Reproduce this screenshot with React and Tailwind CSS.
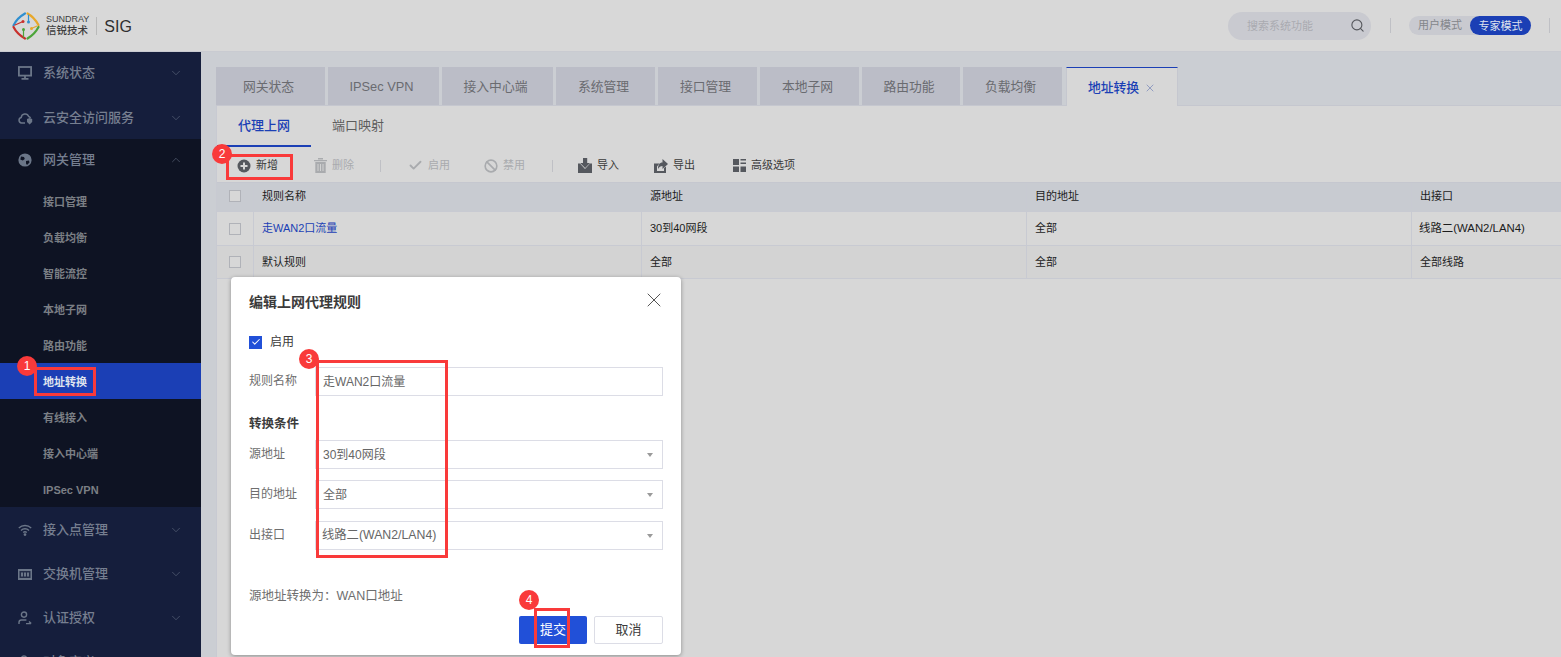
import React from 'react'
import { ChevronDown, ChevronUp, Search, X, Check, Ban } from 'lucide-react'

const font = { fontFamily: '"Liberation Sans", "Noto Sans CJK SC", sans-serif' }

const Logo = () => (
    <svg width="28" height="28" viewBox="0 0 28 28" fill="none" strokeWidth="2.2" strokeLinecap="round">
        <path d="M1.5 13.5 Q5 6 13 1.5" stroke="#2f8fd0" />
        <path d="M15.5 1.5 Q22 5 26.5 13" stroke="#e8a82a" />
        <path d="M1.5 15 Q5 22 13 26.5" stroke="#c8302c" />
        <path d="M26.5 15 Q23 22 15.5 26.5" stroke="#4ca53a" />
        <path d="M3 13 L11 9.5" stroke="#c8302c" strokeWidth="1.2" />
        <path d="M16.5 3 V9.5" stroke="#2f8fd0" strokeWidth="1.2" />
        <path d="M25 14 L19.5 16.5" stroke="#e8a82a" strokeWidth="1.2" />
        <path d="M11.5 18 V25" stroke="#4ca53a" strokeWidth="1.2" />
        <circle cx="11" cy="9.5" r="1.5" fill="#c8302c" />
        <circle cx="16.5" cy="10" r="1.5" fill="#2f8fd0" />
        <circle cx="19.5" cy="16.5" r="1.5" fill="#e8a82a" />
        <circle cx="11.5" cy="17.5" r="1.5" fill="#4ca53a" />
    </svg>
)

const MonitorIcon = () => (
    <svg width="14" height="14" viewBox="0 0 14 14" fill="none" stroke="#6b7688" strokeWidth="1.8">
        <rect x="0.9" y="1" width="12.2" height="8.6" />
        <path d="M7 10v2.5M3.5 12.9h7" />
    </svg>
)

const CloudIcon = () => (
    <svg width="15" height="14" viewBox="0 0 15 14" fill="none" stroke="#6b7688" strokeWidth="1.5">
        <path d="M7 12H3.5a2.8 2.8 0 0 1-.3-5.5 3.9 3.9 0 0 1 7.5-1 3 3 0 0 1 1.8 1.5" />
        <path d="M9 8l2.6-1 2.6 1v3l-2.6 2.5L9 11z" fill="#6b7688" stroke="none" />
    </svg>
)

const GlobeIcon = () => (
    <svg width="14" height="14" viewBox="0 0 14 14">
        <circle cx="7" cy="7" r="6.6" fill="#6b7688" />
        <path d="M3 3.5l3 .5.8 2-2 1.5-2.5-1zM8 8l3-.5.5 2-2.5 2.5-1-1.5z" fill="#0e1323" />
    </svg>
)

const WifiIcon = () => (
    <svg width="14" height="12" viewBox="0 0 14 12" fill="none" stroke="#6b7688" strokeWidth="1.4">
        <path d="M.8 4a9 9 0 0 1 12.4 0M3 6.4a5.8 5.8 0 0 1 8 0M5.2 8.6a2.6 2.6 0 0 1 3.6 0" />
        <circle cx="7" cy="10.6" r=".7" fill="#6b7688" />
    </svg>
)

const SwitchIcon = () => (
    <svg width="14" height="11" viewBox="0 0 14 11">
        <rect width="14" height="11" fill="#6b7688" />
        <rect x="1.5" y="2" width="11" height="7" fill="#232c48" />
        <path d="M3 3.5h2v4H3zM6 3.5h2v4H6zM9 3.5h2v4H9z" fill="#6b7688" />
    </svg>
)

const UserIcon = () => (
    <svg width="14" height="14" viewBox="0 0 14 14" fill="none" stroke="#6b7688" strokeWidth="1.4">
        <circle cx="6" cy="3.6" r="2.6" />
        <path d="M1 13v-1.6A2.4 2.4 0 0 1 3.4 9h5M8 12.6h5M11 10.4l2.2 2.2" />
    </svg>
)

const PlusIcon = ({ color }) => (
    <svg width="14" height="14" viewBox="0 0 14 14">
        <circle cx="7" cy="7" r="6.5" fill={color} />
        <path d="M7 3.5v7M3.5 7h7" stroke="#d7d7d7" strokeWidth="2" />
    </svg>
)

const TrashIcon = ({ color }) => (
    <svg width="13" height="15" viewBox="0 0 13 15" fill={color}>
        <path d="M0 2h13v1.3H0zM4 0h5v1.5H4z" />
        <path d="M1.3 4h10.4v11H1.3z" />
        <path d="M4 6v7M6.5 6v7M9 6v7" stroke="#d7d7d7" strokeWidth=".9" />
    </svg>
)

const ImportIcon = ({ color }) => (
    <svg width="14" height="15" viewBox="0 0 14 15" fill={color}>
        <path d="M0 5.5h2L7 11l5-5.5h2V15H0z" />
        <path d="M5 0h4.2v5H12l-4.9 5L2.2 5H5z" />
    </svg>
)

const ExportIcon = ({ color }) => (
    <svg width="14" height="14" viewBox="0 0 14 14" fill={color}>
        <path d="M0 4.5h5.5L3 7.5V12h7V9l2-1.5V14H0z" />
        <path d="M8.5 0L14 5l-5.5 5V7C6.5 7 5 8 4 10c0-4 1.5-6.5 4.5-6.5z" />
    </svg>
)

const GridIcon = ({ color }) => (
    <svg width="13" height="13" viewBox="0 0 13 13" fill={color}>
        <path d="M0 0h6v6H0zM0 7.5h6V13H0zM7.5 7.5H13V13H7.5zM7.5 0H13v1.5H7.500zM7.500 3.500H13V5H7.500z" />
    </svg>
)

const SideGroup = ({ icon, label, open, className }) => (
    <div className={`flex items-center pl-[18px] pr-[18px] ${className}`}>
        <span className="w-[25px] flex items-center">{icon}</span>
        <span className="flex-1 text-[13px] font-medium text-[#767f90]">{label}</span>
        {open ? <ChevronUp size={14} strokeWidth={1} color="#667085" /> : <ChevronDown size={14} strokeWidth={1} color="#667085" />}
    </div>
)

const SubItem = ({ label, active }) => (
    <div className={`h-[36px] pt-[2px] flex items-center pl-[43px] text-[11px] font-bold ${active ? 'bg-[#1b3fb5] text-[#dfe3ee]' : 'text-[#7b7f85]'}`}>
        {label}
    </div>
)

const tabs = [
    ['网关状态', 'w-[109px]'],
    ['IPSec VPN', 'w-[111px]'],
    ['接入中心端', 'w-[111px]'],
    ['系统管理', 'w-[99px]'],
    ['接口管理', 'w-[99px]'],
    ['本地子网', 'w-[99px]'],
    ['路由功能', 'w-[98px]'],
    ['负载均衡', 'w-[99px]'],
]

const ToolBtn = ({ icon, label, disabled, className }) => (
    <div className={`flex items-center gap-[5px] text-[11px] ${disabled ? 'text-[#a9abae]' : 'text-[#3a3a3a]'} ${className}`}>
        {icon}
        <span>{label}</span>
    </div>
)

const Cell = ({ children, className }) => (
    <div className={`flex items-center text-[11px] text-[#1c1c1c] border-r border-[#c8cad2] pl-2 ${className}`}>{children}</div>
)

const Check2 = () => <span className="block w-3 h-3 border border-[#b0b2b8] bg-[#d7d7d7]" />

const Row = ({ bg, h, name, src, dst, out }) => (
    <div className={`flex border-b border-[#c8cad2] ${bg} ${h}`}>
        <Cell className="w-[37px] pl-[12px]"><Check2 /></Cell>
        <Cell className="w-[388px]">{name}</Cell>
        <Cell className="w-[385px]">{src}</Cell>
        <Cell className="w-[385px]">{dst}</Cell>
        <Cell className="flex-1 border-r-0">{out}</Cell>
    </div>
)

const Field = ({ label, value, select, className }) => (
    <div className={`flex items-center ${className}`}>
        <span className="w-[66px] text-[12px] text-[#6e6e6e] pb-[2px]">{label}</span>
        <div className="w-[348px] h-[29px] border border-[#dcdde6] flex items-center pl-[7px] pr-[9px] text-[12px] text-[#666]">
            <span className="flex-1">{value}</span>
            {select && <span className="w-0 h-0 border-x-[3px] border-x-transparent border-t-[4px] border-t-[#9a9a9a]" />}
        </div>
    </div>
)

const Badge = ({ n, className }) => (
    <span className={`absolute z-30 w-5 h-5 rounded-full bg-[#f93a3a] text-white text-[12px] flex items-center justify-center ${className}`}>{n}</span>
)

const RedBox = ({ className }) => (
    <div className={`absolute z-20 border-[3px] border-[#f93a3a] ${className}`} />
)

const App = () => {
    return (
        <div className="relative w-[1561px] h-[657px] overflow-hidden bg-[#cbced3]" style={font}>
            {/* top bar */}
            <header className="h-[52px] bg-[#d8d8d8] border-b border-[#c9cbd1] flex items-center pl-[12px]">
                <Logo />
                <div className="ml-[6px] leading-none text-[#3d3d3d]">
                    <div className="text-[9px] font-medium">SUNDRAY</div>
                    <div className="text-[10.5px] mt-[1px] font-medium">信锐技术</div>
                </div>
                <span className="w-px h-[18px] bg-[#b9b9b9] ml-[7px] mr-[7px]" />
                <span className="text-[16px] text-[#2f2f2f] pt-[2px]">SIG</span>
                <div className="ml-auto flex items-center">
                    <div className="w-[143px] h-[28px] rounded-full bg-[#c9cad0] flex items-center pl-[19px] pr-[6px] text-[11px] text-[#a9abb0]">
                        <span className="flex-1 pt-[2px]">搜索系统功能</span>
                        <Search size={15} color="#55575c" strokeWidth={1.8} />
                    </div>
                    <span className="w-px h-[15px] bg-[#bfc0c5] ml-[19px] mr-[18px]" />
                    <div className="h-[19px] w-[122px] rounded-full bg-[#c9cad0] flex items-center text-[11px]">
                        <span className="w-[61px] pl-[1px] text-center text-[#84868b] leading-[21px]">用户模式</span>
                        <span className="w-[61px] h-[19px] rounded-full bg-[#1b3fb5] text-[#dfe3ee] text-center leading-[21px]">专家模式</span>
                    </div>
                    <span className="w-px h-[15px] bg-[#bfc0c5] ml-[18px] mr-[11px]" />
                </div>
            </header>

            <div className="flex h-[605px]">
                {/* left nav */}
                <aside className="w-[201px] shrink-0 bg-[#151e3c] overflow-hidden">
                    <SideGroup className="h-[43px] pb-[1px]" icon={<MonitorIcon />} label="系统状态" />
                    <SideGroup className="h-[44px] pt-[2px]" icon={<CloudIcon />} label="云安全访问服务" />
                    <div className="bg-[#0e1323]">
                        <SideGroup className="h-[44px] pb-[2px]" icon={<GlobeIcon />} label="网关管理" open />
                        <SubItem label="接口管理" />
                        <SubItem label="负载均衡" />
                        <SubItem label="智能流控" />
                        <SubItem label="本地子网" />
                        <SubItem label="路由功能" />
                        <SubItem label="地址转换" active />
                        <SubItem label="有线接入" />
                        <SubItem label="接入中心端" />
                        <SubItem label="IPSec VPN" />
                    </div>
                    <SideGroup className="h-[44px] pt-[2px]" icon={<WifiIcon />} label="接入点管理" />
                    <SideGroup className="h-[44px] pt-[2px]" icon={<SwitchIcon />} label="交换机管理" />
                    <SideGroup className="h-[44px] pt-[2px]" icon={<UserIcon />} label="认证授权" />
                    <SideGroup className="h-[44px] pt-[2px]" icon={<UserIcon />} label="对象定义" />
                </aside>

                {/* main area */}
                <main className="flex-1 pl-[15px] pt-[15px] min-w-0">
                    <div className="flex h-[39px] gap-[3px] border-b border-[#c5c7cf]">
                        {tabs.map(([t, w]) => (
                            <div key={t} className={`${w} bg-[#bbbdc7] pt-[1px] pr-[4px] flex items-center justify-center text-[12.8px] text-[#6a6b70]`}>{t}</div>
                        ))}
                        <div className="ml-[1px] w-[112px] h-[39px] pt-[1px] bg-[#d7d7d7] border-t border-x border-t-[#1b3fb5] border-x-[#c5c7cf] flex items-center justify-center gap-[5px] text-[12.8px] font-medium text-[#1b3fb5]">
                            地址转换
                            <X size={12} strokeWidth={1.3} color="#6b7cb5" />
                        </div>
                    </div>

                    <div className="h-[551px] bg-[#d7d7d7] border-l border-[#c8cad2]">
                        <div className="flex h-[41px]">
                            <div className="w-[94px] pt-[1px] flex items-center justify-center text-[13px] font-medium text-[#1b3fb5] border-b-2 border-[#1b3fb5]">代理上网</div>
                            <div className="w-[94px] pb-[1px] flex items-center justify-center text-[13px] text-[#5d5d5d]">端口映射</div>
                        </div>
                        <div className="flex items-center h-[35px] pt-[2px] pl-[20px]">
                            <ToolBtn icon={<PlusIcon color="#55585e" />} label="新增" />
                            <ToolBtn disabled className="ml-[36px]" icon={<TrashIcon color="#a9abae" />} label="删除" />
                            <span className="w-px h-[12px] bg-[#bfc0c5] ml-[26px]" />
                            <ToolBtn disabled className="ml-[27px]" icon={<Check size={15} strokeWidth={3} color="#a9abae" />} label="启用" />
                            <ToolBtn disabled className="ml-[34px]" icon={<Ban size={14} strokeWidth={2.8} color="#a9abae" />} label="禁用" />
                            <span className="w-px h-[12px] bg-[#bfc0c5] ml-[27px]" />
                            <ToolBtn className="ml-[25px]" icon={<ImportIcon color="#55585e" />} label="导入" />
                            <ToolBtn className="ml-[35px]" icon={<ExportIcon color="#55585e" />} label="导出" />
                            <ToolBtn className="ml-[38px]" icon={<GridIcon color="#55585e" />} label="高级选项" />
                        </div>
                        <div className="border-t border-[#c5c7cf]">
                            <Row bg="bg-[#c8cbd1]" h="h-[29px] pb-[2px]" name="规则名称" src="源地址" dst="目的地址" out="出接口" />
                            <Row bg="bg-[#d7d7d7]" h="h-[34px]" name={<span className="text-[#1b3fb5]">走WAN2口流量</span>} src="30到40网段" dst="全部" out={<span className="-ml-[1px] text-[11.4px]">线路二(WAN2/LAN4)</span>} />
                            <Row bg="bg-[#d3d3d3]" h="h-[33px]" name="默认规则" src="全部" dst="全部" out="全部线路" />
                        </div>
                    </div>
                </main>
            </div>

            {/* dialog floats over the table */}
            <section className="absolute z-10 left-[231px] top-[277px] w-[450px] h-[378px] bg-white rounded-[4px] shadow-[0_1px_4px_rgba(0,0,0,0.35)] pl-[18px] pr-[18px]">
                <div className="flex items-center justify-between h-[50px]">
                    <h2 className="text-[14px] font-bold text-[#3b3b3b]">编辑上网代理规则</h2>
                    <X size={24} strokeWidth={1} color="#555" className="-mr-[3px] -mt-[4px]" />
                </div>
                <div className="flex items-center h-[14px] mt-[8px] text-[12px] text-[#3b3b3b]">
                    <span className="w-[13px] h-[13px] bg-[#2150d8] flex items-center justify-center mr-[8px]">
                        <Check size={10} strokeWidth={2.5} color="#fff" />
                    </span>
                    <span>启用</span>
                </div>
                <Field className="mt-[18px]" label="规则名称" value="走WAN2口流量" />
                <h3 className="text-[12.5px] font-bold text-[#3b3b3b] mt-[19px] h-[18px] leading-[18px]">转换条件</h3>
                <Field className="mt-[7px]" label="源地址" value="30到40网段" select />
                <Field className="mt-[11px]" label="目的地址" value="全部" select />
                <Field className="mt-[12px]" label="出接口" value={<span className="-ml-[1px] text-[12.3px]">线路二(WAN2/LAN4)</span>} select />
                <p className="mt-[37px] text-[12.5px] leading-[18px] text-[#6e6e6e]">源地址转换为：WAN口地址</p>
                <div className="flex justify-end gap-[7px] mt-[11px]">
                    <button className="w-[68px] h-[28px] rounded-[2px] bg-[#2150d8] text-white text-[13px]">提交</button>
                    <button className="w-[69px] h-[28px] rounded-[2px] border border-[#dcdde6] text-[#3b3b3b] text-[13px]">取消</button>
                </div>
            </section>

            {/* tutorial annotations */}
            <RedBox className="left-[34px] top-[367px] w-[62px] h-[29px]" />
            <RedBox className="left-[226px] top-[154px] w-[67px] h-[26px]" />
            <RedBox className="left-[316px] top-[360px] w-[132px] h-[198px]" />
            <RedBox className="left-[534px] top-[608px] w-[36px] h-[40px]" />
            <Badge n="1" className="left-[17px] top-[356px]" />
            <Badge n="2" className="left-[212px] top-[144px]" />
            <Badge n="3" className="left-[299px] top-[349px]" />
            <Badge n="4" className="left-[519px] top-[590px]" />
        </div>
    )
}

export default App
